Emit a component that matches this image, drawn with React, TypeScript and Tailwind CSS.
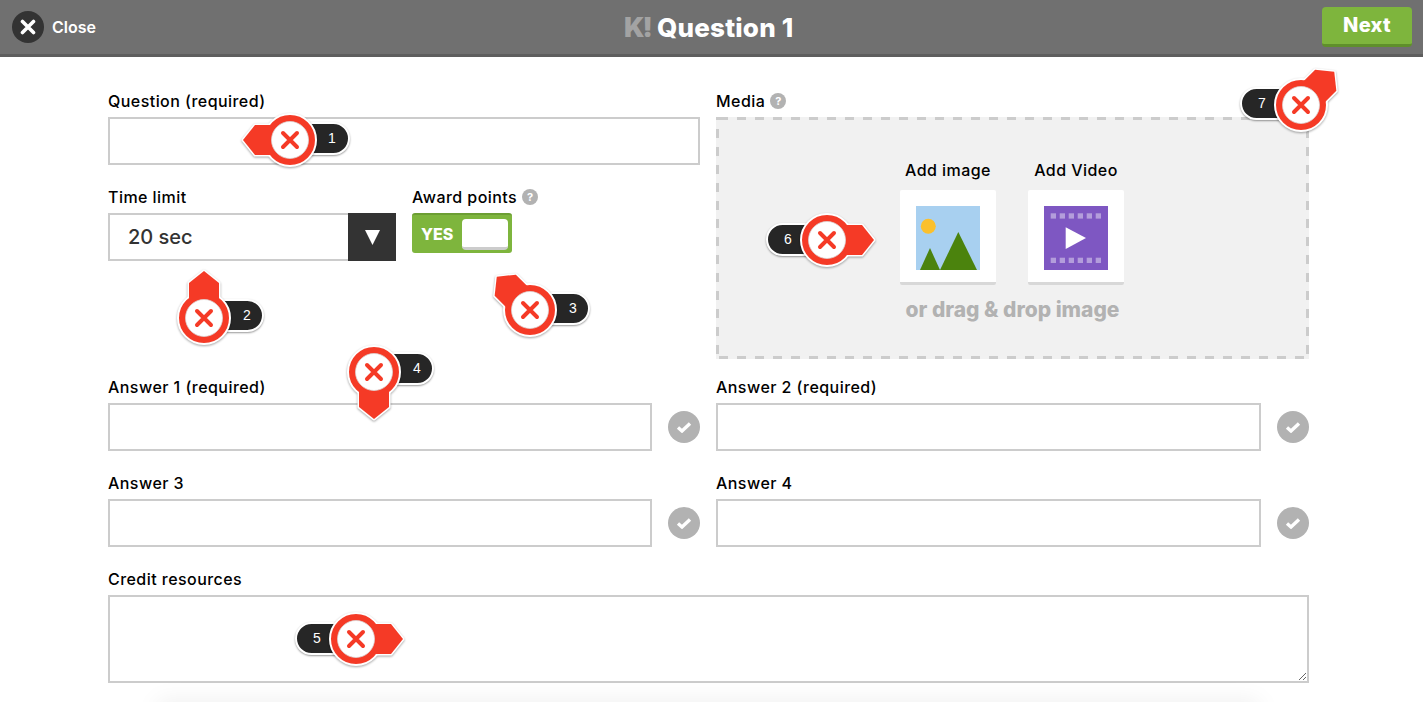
import React from 'react'

const FONT = "font-['Inter','Liberation_Sans',sans-serif]"

const markers = [
  { n: 1, angle: 0, pos: 'left-[290px] top-[140px]', pill: 'left-[0px] top-[-18px] w-[60px] pl-[30px] rounded-r-full', num: 'ml-[6px]' },
  { n: 2, angle: 90, pos: 'left-[204px] top-[318px]', pill: 'left-[0px] top-[-19px] w-[60px] pl-[30px] rounded-r-full', num: 'ml-[7px]' },
  { n: 3, angle: 45, pos: 'left-[530px] top-[310px]', pill: 'left-[0px] top-[-18px] w-[60px] pl-[30px] rounded-r-full', num: 'ml-[7px]' },
  { n: 4, angle: 270, pos: 'left-[374px] top-[372px]', pill: 'left-[0px] top-[-20px] w-[60px] pl-[30px] rounded-r-full', num: 'ml-[7px]' },
  { n: 5, angle: 180, pos: 'left-[356px] top-[639px]', pill: 'left-[-61px] top-[-17px] w-[61px] pl-[16px] rounded-l-full', num: '' },
  { n: 6, angle: 180, pos: 'left-[827px] top-[240px]', pill: 'left-[-61px] top-[-17px] w-[61px] pl-[16px] rounded-l-full', num: '' },
  { n: 7, angle: 135, pos: 'left-[1301px] top-[105px]', pill: 'left-[-61px] top-[-18px] w-[61px] pl-[16px] rounded-l-full', num: '' },
]

function Marker({ m }: { m: (typeof markers)[number] }) {
  return (
    <div className={`absolute w-0 h-0 ${m.pos}`}>
      <div className={`absolute h-[33px] flex items-center bg-[#262626] border-2 border-white shadow-[0_1px_2px_rgba(0,0,0,0.4)] text-white text-[14px] font-['Liberation_Sans',sans-serif] ${m.pill}`}>
        <span className={m.num}>{m.n}</span>
      </div>
      <svg viewBox="-56 -56 112 112" className="absolute left-[-56px] top-[-56px] w-[112px] h-[112px] drop-shadow-[0_1px_1px_rgba(0,0,0,0.35)]">
        <g transform={`rotate(${m.angle})`}>
          <polygon points="-47,0 -35,-15 -10,-15 -10,15 -35,15" fill="#f53a26" stroke="#fff" strokeWidth="3" strokeLinejoin="round" />
          <circle r="26" fill="#f53a26" stroke="#fff" strokeWidth="2" />
          <polygon points="-47,0 -35,-15 -10,-15 -10,15 -35,15" fill="#f53a26" />
        </g>
        <circle r="18.5" fill="#fff" stroke="#d9d9d9" strokeWidth="0.75" />
        <path d="M-7 -7 L7 7 M7 -7 L-7 7" stroke="#f53a26" strokeWidth="4" strokeLinecap="round" />
      </svg>
    </div>
  )
}

function Label({ children, className = '' }: { children: React.ReactNode; className?: string }) {
  return <div className={`h-[18px] leading-[18px] mb-[7px] text-[16px] font-medium text-black tracking-[0.45px] whitespace-nowrap ${className}`}>{children}</div>
}

function Help() {
  return (
    <span className="w-4 h-4 rounded-full bg-[#b2b2b2] text-white text-[11px] font-bold leading-4 tracking-normal flex items-center justify-center">?</span>
  )
}

function Answer({ label }: { label: string }) {
  return (
    <div>
      <Label>{label}</Label>
      <div className="flex items-center gap-4">
        <input className="flex-1 min-w-0 h-[48px] border-2 border-[#cccccc] bg-white" />
        <div className="w-8 h-8 rounded-full bg-[#b2b2b2] flex items-center justify-center shrink-0">
          <svg viewBox="0 0 16 12" className="w-4 h-3">
            <path d="M2 6.5 L6 10 L14 2.5" fill="none" stroke="#fff" strokeWidth="3.4" />
          </svg>
        </div>
      </div>
    </div>
  )
}

function Tile({ label, children }: { label: string; children: React.ReactNode }) {
  return (
    <div className="flex flex-col items-center w-24">
      <div className="text-[16px] font-medium text-black mb-[11px] h-[18px] leading-[18px] whitespace-nowrap tracking-[0.45px]">{label}</div>
      <div className="w-24 h-[95px] bg-white rounded-[2px] border-b-[3px] border-[#d8d8d8] p-4">{children}</div>
    </div>
  )
}

export default function App() {
  return (
    <div className={`relative w-[1423px] h-[702px] overflow-hidden bg-white ${FONT}`}>
      <header className="h-[57px] bg-[#707070] border-b-[3px] border-[#5e5e5e] relative flex items-center justify-between pl-3 pr-[11px]">
        <div className="flex items-center gap-2">
          <div className="w-8 h-8 rounded-full bg-[#333333] flex items-center justify-center">
            <svg viewBox="0 0 16 16" className="w-4 h-4">
              <path d="M2.5 2.5 L13.5 13.5 M13.5 2.5 L2.5 13.5" stroke="#fff" strokeWidth="3.6" strokeLinecap="round" />
            </svg>
          </div>
          <span className="text-white text-[16px] font-semibold">Close</span>
        </div>
        <div className="absolute left-[624px] top-[12px] flex items-center">
          <span className="w-[33px] text-[#a3a3a3] text-[27px] font-black tracking-[-2px] leading-[32px]">K!</span>
          <span className="text-white text-[26px] font-extrabold leading-[32px] whitespace-nowrap tracking-[0.2px]">Question 1</span>
        </div>
        <div className="self-start mt-[7px] w-[90px] h-[40px] pb-[2px] bg-[#7eb53d] border-b-[3px] border-[#5f8f2b] rounded-[4px] flex items-center justify-center text-white text-[20px] font-extrabold tracking-[0.3px]">
          Next
        </div>
      </header>

      <main className="w-[1201px] ml-[108px] pt-[35px]">
        <div className="grid grid-cols-[592px_593px] gap-x-4">
          <div>
            <Label>Question (required)</Label>
            <input className="block w-full h-[48px] border-2 border-[#cccccc] bg-white" />
            <div className="flex gap-4 mt-[23px]">
              <div className="w-[288px]">
                <Label>Time limit</Label>
                <div className="flex h-[48px] border-2 border-[#cccccc] border-r-0">
                  <div className="flex-1 pl-[18px] flex items-center text-[20px] font-medium text-[#333333]">20 sec</div>
                  <div className="w-[48px] my-[-2px] bg-[#333333] flex items-center justify-center">
                    <svg viewBox="0 0 15 15" className="w-[15px] h-[15px]"><polygon points="0,0 15,0 7.5,15" fill="#fff" /></svg>
                  </div>
                </div>
              </div>
              <div>
                <Label className="flex items-center gap-[5px]">
                  Award points <Help />
                </Label>
                <div className="w-[100px] h-[40px] bg-[#7eb53d] border-t-2 border-[#6c9e33] rounded-[3px] flex items-center justify-between pl-[9px] pr-1">
                  <span className="text-white text-[16px] font-extrabold">YES</span>
                  <div className="w-[46px] h-[31px] bg-white rounded-[4px] border-b-[3px] border-[#cccccc]" />
                </div>
              </div>
            </div>
          </div>
          <div>
            <Label className="flex items-center gap-[5px]">Media <Help /></Label>
            <div className="h-[242px] bg-[#f1f1f1] bg-no-repeat [background-image:repeating-linear-gradient(90deg,transparent_-6px_3px,#cccccc_3px_12px),repeating-linear-gradient(90deg,transparent_-6px_3px,#cccccc_3px_12px),repeating-linear-gradient(180deg,#cccccc_-6px_3px,transparent_3px_12px),repeating-linear-gradient(180deg,#cccccc_-6px_3px,transparent_3px_12px)] [background-size:100%_3px,100%_3px,3px_100%,3px_100%] [background-position:0_0,0_100%,0_0,100%_0] flex flex-col items-center pt-[44px]">
              <div className="flex gap-8 -ml-px">
                <Tile label="Add image">
                  <svg viewBox="0 0 64 64" className="w-16 h-16">
                    <rect width="64" height="64" fill="#a8d0f0" />
                    <circle cx="12.3" cy="20.3" r="7.5" fill="#fbc02d" />
                    <polygon points="4,64 14,42 24,64" fill="#4b830d" />
                    <polygon points="24,64 42.3,26 61,64" fill="#4b830d" />
                  </svg>
                </Tile>
                <Tile label="Add Video">
                  <svg viewBox="0 0 64 64" className="w-16 h-16">
                    <rect width="64" height="64" fill="#7e57c2" />
                    {[6.7, 15.7, 24.7, 33.7, 42.7, 51.7].map(x => (
                      <g key={x} fill="#b39ddb">
                        <rect x={x} y="7.3" width="5.3" height="5.3" />
                        <rect x={x} y="51.7" width="5.3" height="5.3" />
                      </g>
                    ))}
                    <polygon points="21.7,21.3 42,32 21.7,43" fill="#fff" />
                  </svg>
                </Tile>
              </div>
              <div className="mt-[12px] text-[21px] font-extrabold text-[#b2b2b2] leading-[26px] whitespace-nowrap">or drag &amp; drop image</div>
            </div>
          </div>
        </div>

        <div className="grid grid-cols-[592px_593px] gap-x-4 gap-y-[23px] mt-[19px]">
          <Answer label="Answer 1 (required)" />
          <Answer label="Answer 2 (required)" />
          <Answer label="Answer 3" />
          <Answer label="Answer 4" />
        </div>

        <div className="mt-[23px]">
          <Label>Credit resources</Label>
          <textarea className="block w-full h-[88px] border-2 border-[#cccccc] bg-white" />
        </div>
        <div className="mx-[50px] mt-[19px] h-[20px] shadow-[0_0_24px_rgba(0,0,0,0.08)]" />
      </main>

      {markers.map(m => (
        <Marker key={m.n} m={m} />
      ))}
    </div>
  )
}
